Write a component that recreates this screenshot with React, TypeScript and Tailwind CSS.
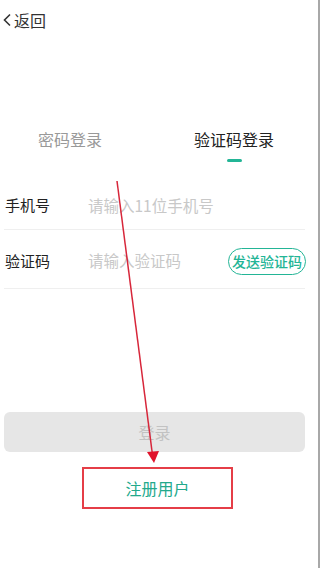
import React from "react";

const font = { fontFamily: '"Noto Sans CJK SC", "Noto Sans", sans-serif' };

export default function App() {
  return (
    <div
      className="relative h-[568px] w-[320px] overflow-hidden bg-white border-r-2 border-[#a8a8a8]"
      style={font}
    >
      {/* header */}
      <div className="flex h-[40px] items-center pl-[2px]">
        <svg width="10" height="14" viewBox="0 0 10 14" className="mr-[2px]">
          <path d="M8 1.5 L2.5 7 L8 12.5" fill="none" stroke="#333" strokeWidth="1.6" />
        </svg>
        <span className="text-[16px] leading-none text-[#333]">返回</span>
      </div>

      {/* tabs */}
      <div className="mt-[84px] flex">
        <div className="flex w-[140px] flex-col items-center">
          <span className="text-[16px] leading-[30px] text-[#999]">密码登录</span>
        </div>
        <div className="flex flex-1 flex-col items-center pl-[10px]">
          <span className="text-[16px] leading-[30px] text-[#222]">验证码登录</span>
          <div className="mt-[5px] h-[3px] w-[15px] rounded-full bg-[#23b596]" />
        </div>
      </div>

      {/* form */}
      <div className="mt-[20px] pl-[4px] pr-[13px]">
        <div className="flex h-[48px] items-center border-b border-[#efefef]">
          <span className="w-[84px] pl-[1px] text-[15px] text-[#222]">手机号</span>
          <span className="text-[15.5px] text-[#c8c8c8]">请输入11位手机号</span>
        </div>
        <div className="flex h-[59px] items-center border-b border-[#efefef] pt-[4px]">
          <span className="w-[84px] pl-[1px] text-[15px] text-[#222]">验证码</span>
          <span className="flex-1 text-[15.5px] text-[#c8c8c8]">请输入验证码</span>
          <span className="-mr-[1px] rounded-full border-[1.5px] border-[#23b596] px-[3px] text-[14px] leading-[25px] font-medium text-[#23b596]">
            发送验证码
          </span>
        </div>

        <div className="mt-[123px] flex h-[40px] items-center justify-center rounded-[6px] bg-[#e6e6e6]">
          <span className="text-[16px] text-[#c2c2c2]">登录</span>
        </div>

        <div className="mt-[15px] flex justify-center pl-[6px]">
          <div className="flex h-[42px] w-[151px] items-center justify-center border-2 border-[#e53e47]">
            <span className="text-[16px] text-[#23a98c]">注册用户</span>
          </div>
        </div>
      </div>

      {/* annotation arrow */}
      <svg className="pointer-events-none absolute left-0 top-0" width="320" height="568">
        <line x1="117" y1="181" x2="152.5" y2="455" stroke="#d7263a" strokeWidth="1.5" />
        <polygon points="147,452 159,451 154,463" fill="#e0142c" />
      </svg>
    </div>
  );
}
